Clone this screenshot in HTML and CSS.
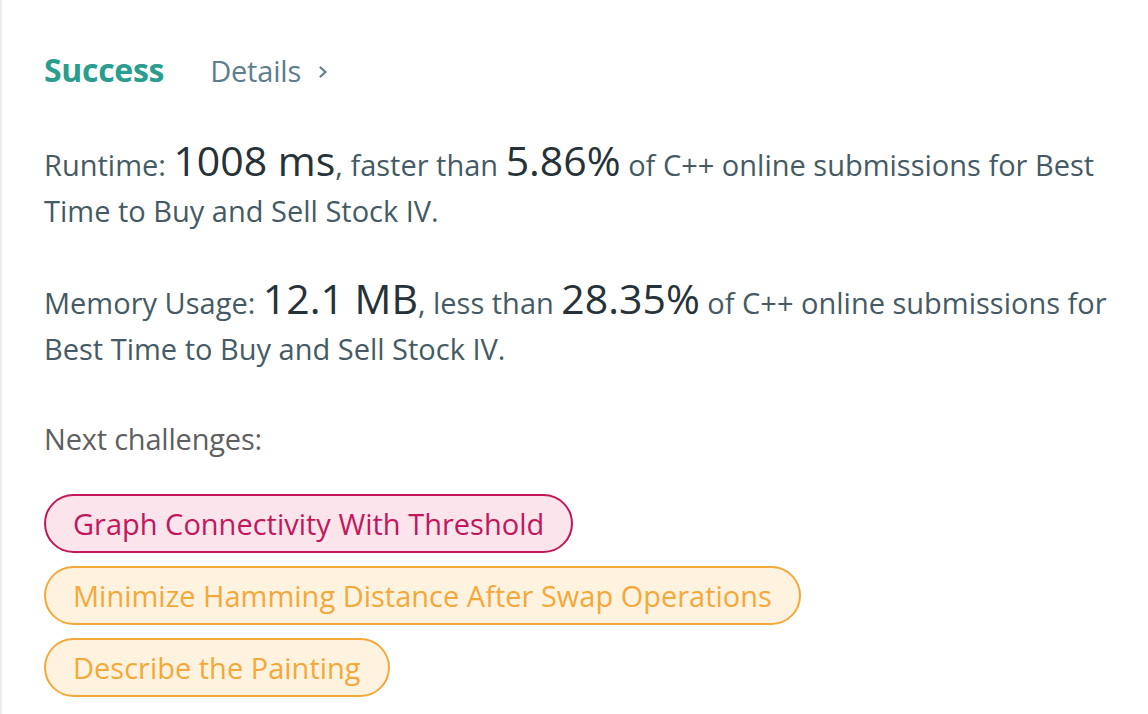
FILE: index.html
```html
<!DOCTYPE html>
<html lang="en">
<head>
<meta charset="utf-8">
<title>Submission result</title>
<link rel="stylesheet" href="styles.css">
</head>
<body>
<div class="panel">
  <div class="header">
    <span class="status">Success</span>
    <a class="details">Details
      <svg class="chev" width="12" height="14" viewBox="0 0 12 14"><path d="M3.5 2.5 L8.5 7 L3.5 11.5" fill="none" stroke="currentColor" stroke-width="2.2" stroke-linecap="round" stroke-linejoin="round"/></svg>
    </a>
  </div>
  <p class="stat">Runtime: <span class="big">1008 ms</span>, faster than <span class="big">5.86%</span> of C++ online submissions for Best Time to Buy and Sell Stock IV.</p>
  <p class="stat">Memory Usage: <span class="big">12.1 MB</span>, less than <span class="big">28.35%</span> of C++ online submissions for Best Time to Buy and Sell Stock IV.</p>
  <p class="next">Next challenges:</p>
  <div class="chips">
    <a class="chip hard">Graph Connectivity With Threshold</a>
    <a class="chip medium">Minimize Hamming Distance After Swap Operations</a>
    <a class="chip medium">Describe the Painting</a>
  </div>
</div>
</body>
</html>
```

FILE: styles.css
```css
html, body {
  margin: 0;
  padding: 0;
  background: #ffffff;
}
body {
  font-family: "Open Sans", "Noto Sans", sans-serif;
  color: #455a64;
}
.panel {
  min-height: 714px;
  box-sizing: border-box;
  border-left: 2px solid #ececec;
  padding: 48px 12px 0 42px;
}
.header {
  display: flex;
  align-items: baseline;
  gap: 46px;
  height: 56px;
}
.status {
  font-size: 32px;
  font-weight: 700;
  color: #2a9d8f;
  letter-spacing: -0.3px;
}
.details {
  font-size: 29px;
  color: #607d8b;
  display: inline-flex;
  align-items: center;
  gap: 16px;
  letter-spacing: -0.2px;
}
.chev {
  display: block;
  margin-top: 2px;
}
.stat {
  margin: 0 0 46px 0;
  font-size: 29px;
  line-height: 46px;
}
.stat:first-of-type {
  margin-top: 38px;
}
.stat + .stat {
  margin-bottom: 44px;
}
.big {
  font-size: 41px;
  line-height: 30px;
  color: #263238;
}
.next {
  margin: 0 0 32px 0;
  font-size: 29px;
  line-height: 46px;
  color: #5f5f5f;
  letter-spacing: -0.2px;
}
.chips {
  display: flex;
  flex-direction: column;
  align-items: flex-start;
  gap: 13px;
}
.chip {
  display: inline-block;
  box-sizing: border-box;
  height: 59px;
  line-height: 55px;
  padding: 0 27px;
  border-radius: 30px;
  border: 2px solid;
  font-size: 29px;
}
.chip.hard {
  background: #fce4ec;
  border-color: #c2185b;
  color: #c2185b;
}
.chip.medium {
  background: #fff3e0;
  border-color: #f5a83a;
  color: #f5a83a;
}
```
